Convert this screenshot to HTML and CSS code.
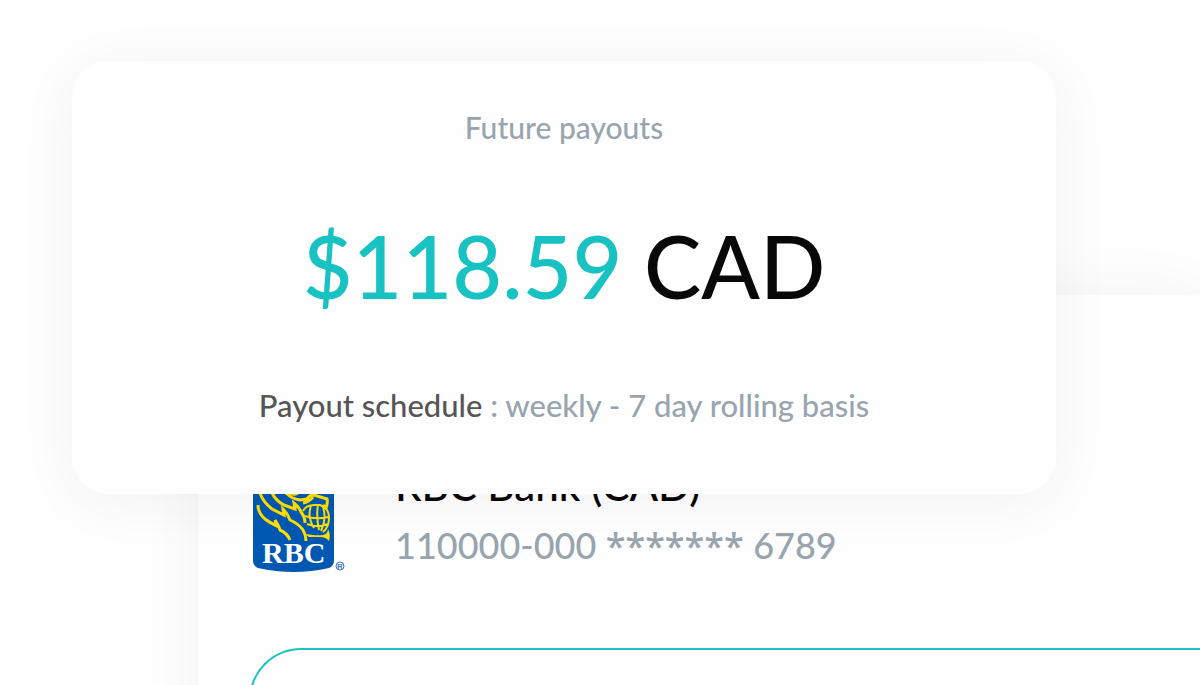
FILE: index.html
```html
<!DOCTYPE html>
<html lang="en">
<head>
<meta charset="utf-8">
<meta name="viewport" content="width=device-width, initial-scale=1">
<title>Payouts</title>
<link rel="stylesheet" href="styles.css">
</head>
<body>
<main class="stage">
  <section class="bank-panel">
    <div class="bank">
      <svg class="bank-logo" viewBox="-4 0 96 112" role="img" aria-label="RBC">
        <path fill="#0058b3" d="M0 0H81V99Q81 105 76 107Q41 115 5 107Q0 105 0 99Z"/>
        <g fill="none" stroke="#fedf01" stroke-width="3" stroke-linejoin="miter">
          <path d="M5 44Q5 52 12 58Q17 62 24 65L22 59Q26 65 27 69Q34 72 37 79"/>
          <path d="M7 32Q10 41 19 48Q25 51 31 54L30 48Q35 53 37 59Q46 63 50 69Q53 74 53 80"/>
          <path d="M19 32Q23 40 31 44Q36 46 42 48L41 42Q46 46 48 51Q52 56 52 62"/>
          <path d="M33 32Q39 38 47 39L54 38Q56 34 61 34L74 38Q75 41 73 47L70 44M60 36Q56 41 50 42"/>
          <path d="M35 31Q40 35 45 32"/>
        </g>
        <path fill="#fedf01" d="M52 73Q65 75 70 74Q75 73 75 68Q78 74 76 80Q73 76 67 76H56Z"/>
        <g fill="none" stroke="#fedf01" stroke-width="2">
          <path d="M50 50Q53 44 61 44H67Q76 47 76 57Q76 66 70 71M52 55Q63 59 75 56M54 63Q65 67 75 63M58 45Q54 56 61 67M65 44Q63 55 66 69M70 46Q74 58 68 70"/>
        </g>
        <text class="logo-name" x="9" y="102">RBC</text>
        <circle cx="87" cy="105" r="4" fill="#fff" stroke="#4378ba"/>
        <text class="logo-mark" x="84" y="108">R</text>
      </svg>
      <div class="bank-details">
        <h2 class="bank-name">RBC Bank (CAD)</h2>
        <p class="bank-account">110000-000<span class="masked"> ******* </span>6789</p>
      </div>
    </div>
    <div class="outlined-box"></div>
  </section>
  <section class="payout-card">
    <h1 class="payout-title">Future payouts</h1>
    <p class="payout-amount"><span class="amount-value">$118.59</span> CAD</p>
    <p class="payout-schedule"><span class="schedule-label">Payout schedule</span> : weekly - 7 day rolling basis</p>
  </section>
</main>
</body>
</html>
```
FILE: styles.css
```css
* { box-sizing: border-box; }

body {
  margin: 0;
  background: #fefefe;
  color: #080808;
  font-family: "Lato Medium", Lato, "Open Sans", sans-serif;
  font-weight: 500;
}

h1, h2, p { margin: 0; font-weight: inherit; }

.stage {
  display: grid;
  height: 100vh;
  overflow: hidden;
}

.bank-panel, .payout-card { grid-area: 1 / 1; }

.bank-panel {
  margin: 295px 0 0 16.5%;
  padding: 162px 0 0 51px;
  background: #fefefe;
  box-shadow: 0 0 60px rgba(0, 0, 0, 0.05);
}

.bank {
  display: flex;
  align-items: flex-end;
  gap: 50px;
}

.bank-logo {
  flex: none;
  width: 96px;
  height: 112px;
}

.logo-name {
  fill: #fff;
  font: bold 30px "Liberation Serif", serif;
}

.logo-mark {
  fill: #4378ba;
  font: bold 8px "Liberation Sans", sans-serif;
}

.bank-details {
  display: flex;
  flex-direction: column;
  gap: 4px;
}

.bank-name {
  font-size: 42px;
  line-height: 56px;
}

.bank-account {
  color: #98a5ae;
  font-size: 36px;
  line-height: 56px;
}

.masked {
  font-family: "Noto Sans", sans-serif;
  line-height: 1;
}

.outlined-box {
  height: 160px;
  margin: 75px 0 0;
  border: 2px solid #19c2c2;
  border-right: 0;
  border-radius: 52px 0 0 52px;
}

.payout-card {
  z-index: 1;
  align-self: start;
  display: flex;
  flex-direction: column;
  align-items: center;
  gap: 57px;
  margin: 61px 12% 0 6%;
  padding: 46px 32px 69px;
  border-radius: 36px;
  background: #fefefe;
  box-shadow: 0 8px 60px rgba(0, 0, 0, 0.05);
  text-align: center;
}

.payout-title, .payout-schedule {
  color: #98a5ae;
  line-height: 40px;
}

.payout-title { font-size: 30px; }
.payout-schedule { font-size: 31px; }

.payout-amount {
  font-size: 86px;
  line-height: 124px;
}

.amount-value { color: #19c2c2; }
.schedule-label { color: #555; }
```
